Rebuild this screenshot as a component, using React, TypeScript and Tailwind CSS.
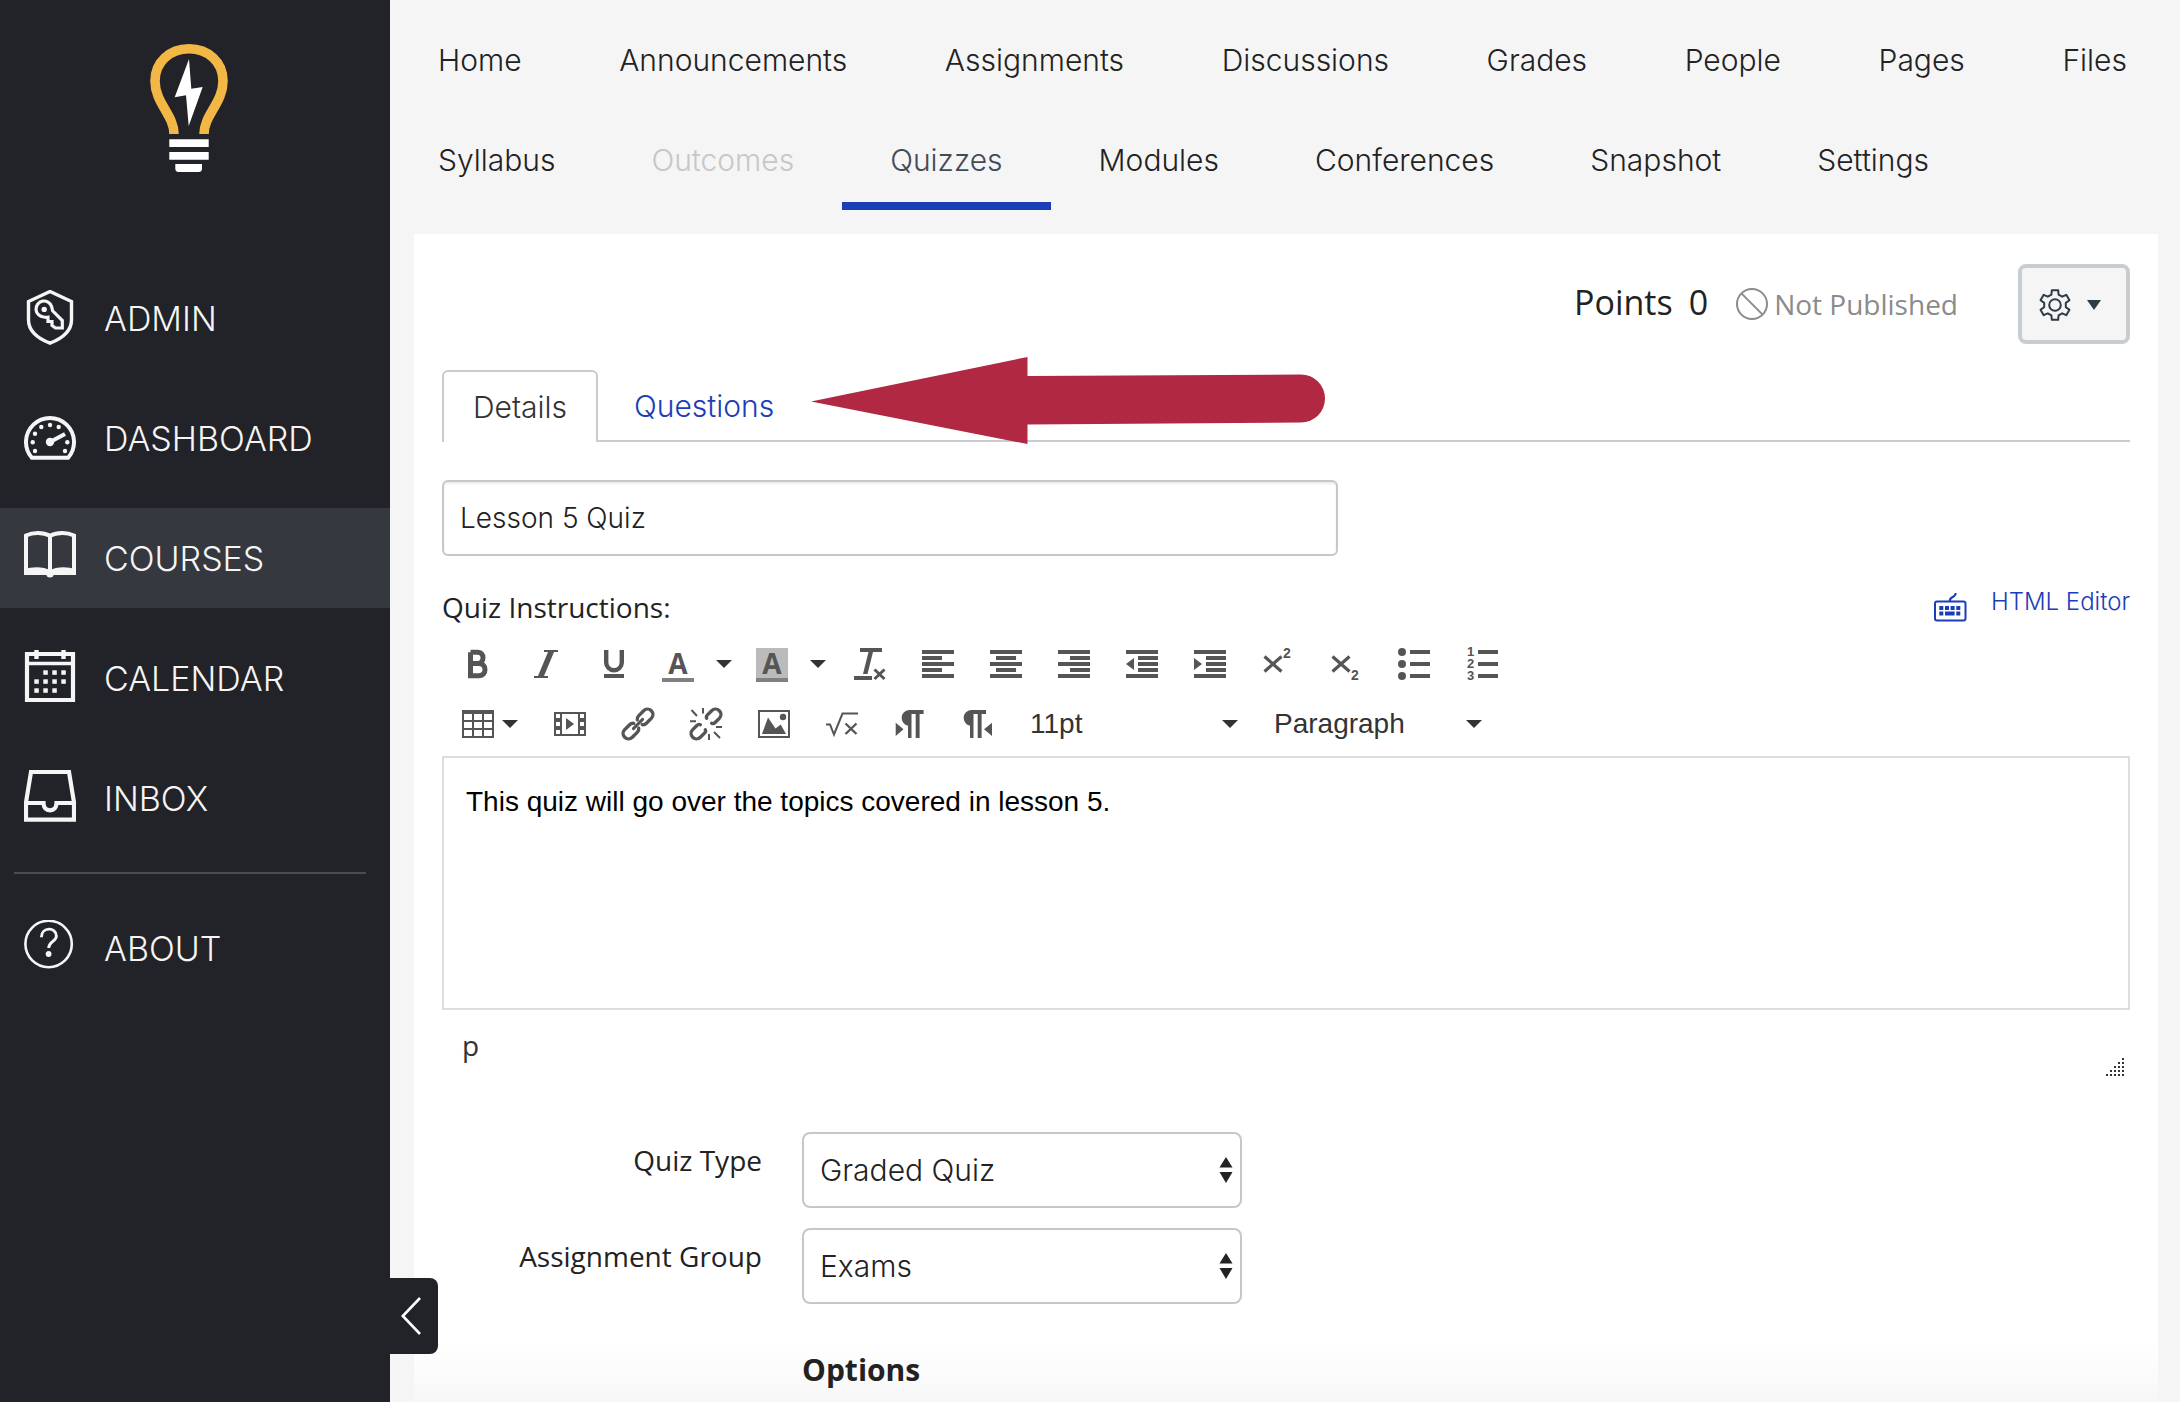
import type { ReactNode } from "react"
import clsx from "clsx"

const sideLinks = [
  { label: "ADMIN", icon: <AdminIcon /> },
  { label: "DASHBOARD", icon: <DashboardIcon /> },
  { label: "COURSES", icon: <CoursesIcon />, active: true },
  { label: "CALENDAR", icon: <CalendarIcon /> },
  { label: "INBOX", icon: <InboxIcon /> },
]

const courseLinksTop = ["Home", "Announcements", "Assignments", "Discussions", "Grades", "People", "Pages", "Files"]
const courseLinksBottom = ["Syllabus", "Outcomes", "Quizzes", "Modules", "Conferences", "Snapshot", "Settings"]

/* ---------- Sidebar icons ---------- */

function SideIcon({ children }: { children: ReactNode }) {
  return (
    <svg viewBox="0 0 52 56" className="h-14 w-[52px] shrink-0" fill="none" stroke="currentColor" aria-hidden="true">
      {children}
    </svg>
  )
}

function AdminIcon() {
  return (
    <SideIcon>
      <path d="M26 1.5 47.5 11.5V30C47.5 41 38 48.5 26 53.2 14 48.5 4.5 41 4.5 30V11.5Z" strokeWidth="3.4" />
      <path
        d="M27.6 16.5A8 8 0 1 0 19.6 27C21.5 27.5 23 27.3 24 27.2V31.5H28V35.5L31.5 38H38.3V30.5L28.6 20.8Z"
        strokeWidth="3.2"
      />
      <circle cx="20.2" cy="19.4" r="2.7" fill="currentColor" stroke="none" />
    </SideIcon>
  )
}

function DashboardIcon() {
  const dots = [[8.7, 32.3], [11, 23.7], [17.3, 17], [26, 15], [34.7, 17], [43.3, 32.3], [11, 41], [41, 41]]
  return (
    <SideIcon>
      <path d="M7.8 47.7A24 24 0 1 1 44.2 47.7Z" strokeWidth="4" />
      {dots.map(([x, y]) => (
        <circle key={`${x}-${y}`} cx={x} cy={y} r="2.2" fill="currentColor" stroke="none" />
      ))}
      <circle cx="26" cy="32" r="4.2" fill="currentColor" stroke="none" />
      <path d="M26 32 41 24" strokeWidth="4" />
    </SideIcon>
  )
}

function CoursesIcon() {
  return (
    <SideIcon>
      <path d="M2 43V5.5C9 2 19 2 26 5.8 33 2 43 2 50 5.5V43M26 5.8V44" strokeWidth="4" />
      <path
        d="M0 45V39.5C8 36.5 20 36.5 26 40.5 32 36.5 44 36.5 52 39.5V45H29.5A3.5 2.4 0 0 1 22.5 45Z"
        fill="currentColor"
        stroke="none"
      />
    </SideIcon>
  )
}

function CalendarIcon() {
  const days = [
    [19.3, 20.3], [28.3, 20.3], [37.3, 20.3],
    [10.3, 29.3], [19.3, 29.3], [28.3, 29.3], [37.3, 29.3],
    [10.3, 38.3], [19.3, 38.3], [28.3, 38.3],
  ]
  return (
    <SideIcon>
      <path d="M3 4H49V50H3Z" strokeWidth="4.2" />
      <path d="M3 13.5H49" strokeWidth="3.6" />
      <path d="M12.5 0V9M39.5 0V9" strokeWidth="4.4" />
      {days.map(([x, y]) => (
        <rect key={`${x}-${y}`} x={x} y={y} width="4.5" height="4.5" fill="currentColor" stroke="none" />
      ))}
    </SideIcon>
  )
}

function InboxIcon() {
  return (
    <SideIcon>
      <path d="M7 2H45L50 32.5V49.7H2V32.5Z" strokeWidth="4.2" />
      <path d="M2 33H19.5C19.5 37.5 22 40.3 26 40.3S32.5 37.5 32.5 33H50" strokeWidth="4.2" />
    </SideIcon>
  )
}

function AboutIcon() {
  return (
    <SideIcon>
      <circle cx="24.6" cy="24" r="23.2" strokeWidth="2.6" />
      <path d="M17.4 17.2C17.4 6.6 32.4 6.8 32.4 16 32.4 21.5 24.7 21.5 24.7 28" strokeWidth="2.9" />
      <circle cx="24.6" cy="34" r="2.9" fill="currentColor" stroke="none" />
    </SideIcon>
  )
}

function Logo() {
  return (
    <svg viewBox="0 0 78 128" className="h-32 w-[78px]" aria-label="Home">
      <path
        d="M24 90C24 71 5 59 5 37 5 18 20 4.8 39 4.8S73 18 73 37C73 59 54 71 54 90"
        fill="none"
        stroke="#f3b746"
        strokeWidth="9.6"
      />
      <path d="M39 15 41.3 44.7 52.7 43 38.7 82 36 51.3 24.7 53.3Z" fill="#fff" />
      <path d="M19.3 95.3H58.7V103H19.3ZM19.3 108H58.7V115.7H19.3ZM25.3 120H52V124.5Q52 128 48.5 128H28.8Q25.3 128 25.3 124.5Z" fill="#fff" />
    </svg>
  )
}

/* ---------- Editor toolbar ---------- */

function ToolIcon({ children }: { children: ReactNode }) {
  return (
    <svg viewBox="0 0 32 32" className="h-8 w-8 shrink-0 overflow-visible text-[#555]" fill="currentColor" aria-hidden="true">
      {children}
    </svg>
  )
}

function Caret() {
  return (
    <svg viewBox="0 0 16 8" className="h-2 w-4 shrink-0" fill="#333" aria-hidden="true">
      <path d="M0 0H16L8 8Z" />
    </svg>
  )
}

function ToolButton({ label, children }: { label: string; children: ReactNode }) {
  return (
    <button type="button" aria-label={label} className="flex h-[60px] w-[68px] shrink-0 items-center justify-center">
      <ToolIcon>{children}</ToolIcon>
    </button>
  )
}

function ColorButton({ label, children }: { label: string; children: ReactNode }) {
  return (
    <button type="button" aria-label={label} className="flex h-[60px] w-[94px] shrink-0 items-center gap-[22px] pl-[14px]">
      <ToolIcon>
        {children}
        <text x="16" y="26" textAnchor="middle" className="font-['Open_Sans',sans-serif] text-[28px] font-bold">A</text>
        <path d="M0 30H32V34H0Z" fill="#808080" />
      </ToolIcon>
      <Caret />
    </button>
  )
}

function AlignLines({ from, to }: { from: number; to: number }) {
  return <path d={`M0 4H32M${from} 10H${to}M0 16H32M${from} 22H${to}M0 28H32`} stroke="currentColor" strokeWidth="4" />
}

function IndentLines() {
  return <path d="M0 4H32M12 10H32M12 16H32M12 22H32M0 28H32" stroke="currentColor" strokeWidth="4" />
}

function TextSelect({ label, value }: { label: string; value: string }) {
  return (
    <div className="relative flex h-[60px] w-[244px] items-center">
      <select
        aria-label={label}
        defaultValue={value}
        className="w-full appearance-none bg-transparent pl-[18px] font-['Liberation_Sans',sans-serif] text-[28px] leading-10 text-[#333]"
      >
        <option>{value}</option>
      </select>
      <span className="pointer-events-none absolute right-[18px]">
        <Caret />
      </span>
    </div>
  )
}

function Toolbar() {
  return (
    <div className="mt-[6px] pl-[2px]">
      <div className="flex flex-wrap">
        <ToolButton label="Bold">
          <path d="M8.5 4.2V27.8H16.5C21 27.8 23 25 23 21.5S20.5 15.5 16.5 15.5H9M8.5 4.2H15.5C19 4.2 21 6.5 21 9.7S19 15.5 15.5 15.5" fill="none" stroke="currentColor" strokeWidth="5" />
        </ToolButton>
        <ToolButton label="Italic">
          <path d="M14 2H28V4H24L14 28H18V30H4V28H8L18 4H14Z" />
        </ToolButton>
        <ToolButton label="Underline">
          <path d="M8.2 2V14.5A7.8 7.8 0 0 0 23.8 14.5V2" fill="none" stroke="currentColor" strokeWidth="4.4" />
          <path d="M6 26H26V30H6Z" />
        </ToolButton>
        <ColorButton label="Text color">{null}</ColorButton>
        <ColorButton label="Background color">
          <path d="M0 0H32V30H0Z" fill="#bbb" />
        </ColorButton>
        <ToolButton label="Clear formatting">
          <path d="M6 0H28V4H19L13.5 26H9L14.5 4H6ZM0 28H18V32H0Z" />
          <path d="M20.5 21.5 30.5 31M30.5 21.5 20.5 31" stroke="currentColor" strokeWidth="3" />
        </ToolButton>
        <ToolButton label="Align left"><AlignLines from={0} to={20} /></ToolButton>
        <ToolButton label="Align center"><AlignLines from={6} to={26} /></ToolButton>
        <ToolButton label="Align right"><AlignLines from={12} to={32} /></ToolButton>
        <ToolButton label="Decrease indent">
          <IndentLines />
          <path d="M8 10V22L0 16Z" />
        </ToolButton>
        <ToolButton label="Increase indent">
          <IndentLines />
          <path d="M0 10V22L8 16Z" />
        </ToolButton>
        <ToolButton label="Superscript">
          <path d="M2.5 8.500 19.500 23.500M19.500 8.500 2.500 23.500" stroke="currentColor" strokeWidth="3.2" />
          <text x="21" y="10" className="font-['Liberation_Sans',sans-serif] text-[14px] font-bold">2</text>
        </ToolButton>
        <ToolButton label="Subscript">
          <path d="M2.5 8.500 19.500 23.500M19.500 8.500 2.500 23.500" stroke="currentColor" strokeWidth="3.2" />
          <text x="21" y="32" className="font-['Liberation_Sans',sans-serif] text-[14px] font-bold">2</text>
        </ToolButton>
        <ToolButton label="Bullet list">
          <circle cx="4" cy="4" r="4" />
          <circle cx="4" cy="16" r="4" />
          <circle cx="4" cy="28" r="4" />
          <path d="M12 4H32M12 16H32M12 28H32" stroke="currentColor" strokeWidth="4" />
        </ToolButton>
        <ToolButton label="Numbered list">
          <g className="font-['Liberation_Sans',sans-serif] text-[13px] font-bold">
            <text x="1" y="8">1</text>
            <text x="1" y="20">2</text>
            <text x="1" y="32">3</text>
          </g>
          <path d="M12 4H32M12 16H32M12 28H32" stroke="currentColor" strokeWidth="4" />
        </ToolButton>
      </div>

      <div className="flex flex-wrap">
        <button type="button" aria-label="Table" className="flex h-[60px] w-[92px] shrink-0 items-center gap-2 pl-[18px]">
          <ToolIcon>
            <path d="M0 2H32V6H0Z" />
            <path d="M1 3V29H31V3M11 4V29M21 4V29M1 13H31M1 21H31" fill="none" stroke="currentColor" strokeWidth="2" />
          </ToolIcon>
          <Caret />
        </button>
        <ToolButton label="Embed media">
          <path fillRule="evenodd" d="M0 4H32V28H0ZM8 6V26H24V6ZM2 6V10H6V6ZM2 14V18H6V14ZM2 22V26H6V22ZM26 6V10H30V6ZM26 14V18H30V14ZM26 22V26H30V22Z" />
          <path d="M12 10V22L20 16Z" />
        </ToolButton>
        <ToolButton label="Insert link">
          <g transform="rotate(-45 16 16)" fill="none" stroke="currentColor" strokeWidth="3.4" strokeLinecap="round">
            <path d="M13.5 19.5C12.5 21 11.5 21.4 9.5 21.4H2.6A5.4 5.4 0 0 1 2.6 10.6H9.5C11.5 10.6 12.5 11 13.5 12.5" />
            <path d="M18.5 19.5C19.5 21 20.5 21.4 22.5 21.4H29.4A5.4 5.4 0 0 0 29.4 10.6H22.5C20.5 10.6 19.5 11 18.5 12.5" />
            <path d="M9.5 16H22.5" strokeWidth="3" />
          </g>
        </ToolButton>
        <ToolButton label="Remove link">
          <g transform="rotate(-45 16 16)" fill="none" stroke="currentColor" strokeWidth="3.4" strokeLinecap="round">
            <path d="M11.5 19.5C11 21 10 21.4 8.5 21.4H2.6A5.4 5.4 0 0 1 2.6 10.6H8.5C10 10.6 11 11 11.5 12.5" />
            <path d="M20.5 19.5C21 21 22 21.4 23.5 21.4H29.4A5.4 5.4 0 0 0 29.4 10.6H23.5C22 10.6 21 11 20.5 12.5" />
          </g>
          <path d="M1.5 2 7 8M13 0V5.5M0 13.2H6M26 19H32M19 26V32M24 24 30 30" stroke="currentColor" strokeWidth="2" />
        </ToolButton>
        <ToolButton label="Insert image">
          <path d="M1 3H31V29H1Z" fill="none" stroke="currentColor" strokeWidth="2" />
          <circle cx="25" cy="9" r="3.2" />
          <path d="M4 26 10 9.5 17.5 20.5 22.7 16.5 28 26Z" />
        </ToolButton>
        <ToolButton label="Insert math equation">
          <path d="M0 16.5H4L8 26.5 16.5 5.5H32" fill="none" stroke="currentColor" strokeWidth="2" />
          <path d="M19.5 15.5 30.5 26M30.5 15.5 19.5 26" stroke="currentColor" strokeWidth="2.4" />
        </ToolButton>
        <ToolButton label="Left to right">
          <path d="M29.6 2H15A8 8 0 0 0 14 17.8V30H17.5V6H21.7V30H25.6V6H29.6ZM1.7 14.7V28L9.5 21.3Z" />
        </ToolButton>
        <ToolButton label="Right to left">
          <path d="M24 2H9A8 8 0 0 0 8 17.8V30H11.5V6H15.7V30H19.6V6H24ZM30 14.7V28L22 21.3Z" />
        </ToolButton>
        <TextSelect label="Font size" value="11pt" />
        <TextSelect label="Format" value="Paragraph" />
      </div>
    </div>
  )
}

/* ---------- Page parts ---------- */

function Sidebar() {
  return (
    <aside className="relative w-[390px] shrink-0 bg-[#222328] font-['Inter',sans-serif] text-[#f5f5f5]">
      <a href="#home" className="flex justify-center pr-3 pt-11">
        <Logo />
      </a>
      <nav className="mt-24 flex flex-col gap-5">
        {sideLinks.map((link) => (
          <a
            key={link.label}
            href="#"
            className={clsx("flex h-[100px] items-center gap-7 pl-6 text-[34px] font-light", link.active && "bg-[#36383f]")}
          >
            {link.icon}
            {link.label}
          </a>
        ))}
      </nav>
      <hr className="ml-[14px] mr-6 mt-6 border-t-2 border-[#4b4c51]" />
      <a href="#about" className="mt-6 flex h-[100px] items-center gap-7 pl-6 text-[34px] font-light">
        <AboutIcon />
        ABOUT
      </a>
      <button
        type="button"
        aria-label="Collapse menu"
        className="absolute -right-12 bottom-12 flex h-[76px] w-14 items-center justify-center rounded-r-lg bg-[#222328] pl-[2px]"
      >
        <svg viewBox="0 0 20 38" className="h-[38px] w-5" fill="none" stroke="#fff" strokeWidth="2.6">
          <path d="M19 1 1.8 19 19 37" />
        </svg>
      </button>
    </aside>
  )
}

function CourseNav() {
  return (
    <nav className="pt-[10px] font-['Inter',sans-serif] text-[30px] font-light text-[#222]">
      <div className="flex justify-between pl-12 pr-[53px]">
        {courseLinksTop.map((label) => (
          <a key={label} href="#" className="flex h-[100px] items-center">
            {label}
          </a>
        ))}
      </div>
      <div className="flex">
        {courseLinksBottom.map((label) => (
          <a
            key={label}
            href="#"
            className={clsx(
              "flex h-[100px] items-center border-y-8 border-transparent px-12",
              label === "Outcomes" && "text-[#c7c7c7]",
              label === "Quizzes" && "border-b-[#1a3db8] text-[#444a55]",
            )}
          >
            {label}
          </a>
        ))}
      </div>
    </nav>
  )
}

function GearIcon() {
  // Six teeth, the first one pointing up.
  const points = [0, 60, 120, 180, 240, 300].flatMap((turn) =>
    [[-19, 11], [-12, 15.2], [12, 15.2], [19, 11]].map(([angle, radius]) => {
      const rad = ((turn + angle - 90) * Math.PI) / 180
      return `${(16 + radius * Math.cos(rad)).toFixed(2)},${(16 + radius * Math.sin(rad)).toFixed(2)}`
    }),
  )
  return (
    <svg viewBox="0 0 32 32" className="h-8 w-8" fill="none" stroke="currentColor" strokeWidth="2" strokeLinejoin="round">
      <polygon points={points.join(" ")} />
      <circle cx="16" cy="16" r="5.8" />
    </svg>
  )
}

function QuizHeader() {
  return (
    <div className="flex h-20 items-center justify-end">
      <span className="mr-7 flex gap-4 pb-1 text-[34px] leading-10 text-[#222]">
        <span>Points</span>
        <span>0</span>
      </span>
      <span className="mr-[60px] flex items-center gap-[6px] text-[28px] text-[#8b8b8b]">
        <svg viewBox="0 0 32 32" className="h-8 w-8" fill="none" stroke="currentColor" strokeWidth="2" aria-hidden="true">
          <circle cx="16" cy="16" r="15" />
          <path d="M5.4 5.4 26.6 26.6" />
        </svg>
        Not Published
      </span>
      <button
        type="button"
        aria-label="Manage quiz"
        className="flex h-20 w-28 items-center justify-center gap-4 rounded-lg border-4 border-[#c7cdd1] bg-[#f5f5f5] pr-2 pt-[2px] text-[#2d3b45]"
      >
        <GearIcon />
        <svg viewBox="0 0 14 10" className="h-[10px] w-[14px]" fill="currentColor">
          <path d="M0 0H14L7 10Z" />
        </svg>
      </button>
    </div>
  )
}

function Tabs() {
  return (
    <div className="relative mt-[26px] flex h-[72px] border-b-2 border-[#c7cdd1] font-['Inter',sans-serif] text-[30px] font-light">
      <a
        href="#details"
        className="-mb-[2px] flex w-[156px] items-center justify-center rounded-t-md border-2 border-b-0 border-[#c7cdd1] bg-white text-[#333]"
      >
        Details
      </a>
      <a href="#questions" className="flex items-center px-9 pt-[2px] text-[#1a3db8]">
        Questions
      </a>
      <svg viewBox="0 0 514 87" className="absolute -top-[13px] left-[369px] h-[87px] w-[514px]" fill="#b02841" aria-hidden="true">
        <path d="M0 44.5 216.5 0V19L490 17.5A24 24 0 0 1 490 65.5L216.5 67.5V87Z" />
      </svg>
    </div>
  )
}

function FormSelect({ id, label, value }: { id: string; label: string; value: string }) {
  return (
    <div className="flex items-start gap-10">
      <label htmlFor={id} className="w-80 pt-2 text-right leading-10">
        {label}
      </label>
      <div className="relative">
        <select
          id={id}
          defaultValue={value}
          className="h-[76px] w-[440px] appearance-none rounded-lg border-2 border-[#c7c7c7] bg-white px-4 font-['Inter',sans-serif] text-[30px] font-light text-[#222]"
        >
          <option>{value}</option>
        </select>
        <svg viewBox="0 0 14 26" className="pointer-events-none absolute right-[9px] top-[25px] h-[26px] w-[14px]" fill="#222">
          <path d="M7 0 13.5 10.5H.5ZM7 26 .5 15H13.5Z" />
        </svg>
      </div>
    </div>
  )
}

function ResizeGrip() {
  const cells = [0, 1, 2, 3, 4].flatMap((row) => [0, 1, 2, 3, 4].filter((col) => col >= 4 - row).map((col) => [col, row]))
  return (
    <svg viewBox="0 0 18 18" className="mb-1 mr-[6px] h-[18px] w-[18px] self-end" fill="#333" aria-hidden="true">
      {cells.map(([col, row]) => (
        <rect key={`${col}-${row}`} x={col * 4} y={row * 4} width="2" height="2" />
      ))}
    </svg>
  )
}

export default function App() {
  return (
    <div className="flex min-h-screen bg-[#f5f5f5] font-['Open_Sans',sans-serif] text-[28px] text-[#222]">
      <Sidebar />
      <div className="flex min-w-0 flex-1 flex-col">
        <CourseNav />

        <main className="ml-6 mr-[22px] mt-6 flex-1 bg-white bg-linear-to-t from-[#f7f7f7] to-white to-5% px-7 pt-[30px]">
          <QuizHeader />
          <Tabs />

          <input
            type="text"
            aria-label="Quiz title"
            defaultValue="Lesson 5 Quiz"
            className="mt-[38px] block h-[76px] w-[896px] rounded-md border-2 border-[#c7c7c7] bg-white px-4 font-['Inter',sans-serif] font-light shadow-[inset_0_2px_2px_rgba(0,0,0,0.08)]"
          />

          <div className="mt-[30px] flex h-[42px] items-center justify-between">
            <label htmlFor="instructions">Quiz Instructions:</label>
            <div className="flex items-start gap-6 self-start text-[#1a3db8]">
              <a href="#shortcuts" aria-label="Keyboard shortcuts" className="pt-[6px]">
                <svg viewBox="0 0 34 30" className="h-[30px] w-[34px]" fill="none" stroke="currentColor" strokeWidth="2">
                  <rect x="2" y="9.5" width="30.5" height="19" rx="2" />
                  <path d="M16.7 9C16.7 4 22.7 6 22.7 1" />
                  <path
                    d="M6.3 14H10.3V18H6.3ZM12 14H16V18H12ZM17.6 14H21.6V18H17.6ZM23.3 14H27.3V18H23.3ZM6.3 19.6H10.3V23.5H6.3ZM12 19.6H21.6V23.5H12ZM23.3 19.6H27.3V23.5H23.3Z"
                    fill="currentColor"
                    stroke="none"
                  />
                </svg>
              </a>
              <a href="#html" className="font-['Inter',sans-serif] text-[24px] font-light leading-8">
                HTML Editor
              </a>
            </div>
          </div>

          <Toolbar />

          <textarea
            id="instructions"
            defaultValue="This quiz will go over the topics covered in lesson 5."
            className="mt-[2px] block h-[254px] w-full resize-none border-2 border-[#ddd] bg-white px-[22px] py-6 font-['Liberation_Sans',sans-serif] leading-10 text-black"
          />
          <div className="flex h-[70px] items-center justify-between pl-5 text-[#333]">
            <span>p</span>
            <ResizeGrip />
          </div>

          <div className="mt-[52px] flex flex-col gap-5">
            <FormSelect id="quiz-type" label="Quiz Type" value="Graded Quiz" />
            <FormSelect id="assignment-group" label="Assignment Group" value="Exams" />
          </div>
          <h2 className="ml-[360px] mt-[46px] text-[30px] font-bold leading-10">Options</h2>
        </main>
      </div>
    </div>
  )
}
